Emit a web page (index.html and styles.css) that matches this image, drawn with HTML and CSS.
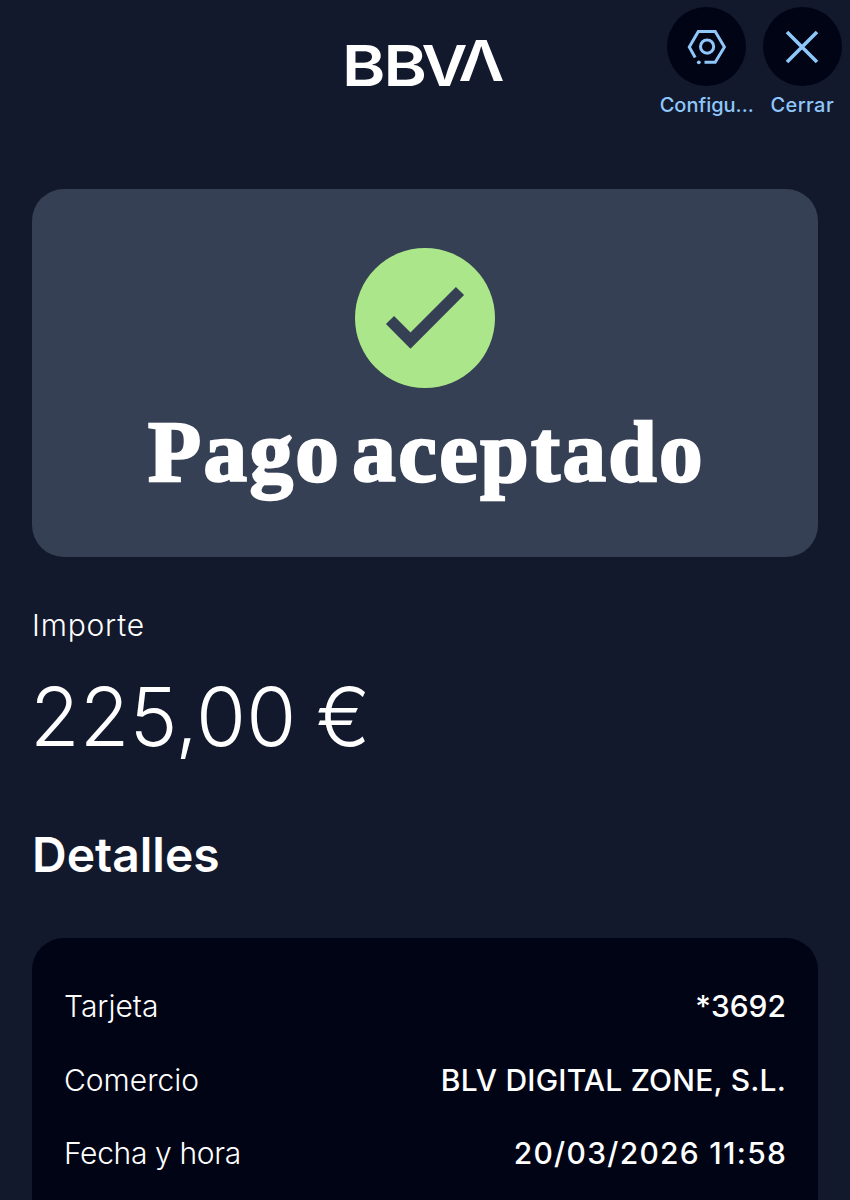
FILE: index.html
```html
<!DOCTYPE html>
<html lang="es">
<head>
  <meta charset="UTF-8" />
  <meta name="viewport" content="width=device-width, initial-scale=1.0"/>
  <title>Pago aceptado</title>
  <link rel="stylesheet" href="styles.css">
</head>
<body>
  <header class="header">
    <svg class="logo" viewBox="0 0 160 52" aria-label="BBVA">
      <text x="-3" y="49" textLength="43.5" lengthAdjust="spacingAndGlyphs">B</text>
      <text x="38.5" y="49" textLength="43.5" lengthAdjust="spacingAndGlyphs">B</text>
      <text x="76.5" y="49" textLength="46" lengthAdjust="spacingAndGlyphs">V</text>
      <text x="113.5" y="43.5" textLength="46" lengthAdjust="spacingAndGlyphs">Λ</text>
    </svg>
    <nav class="actions">
      <div class="action">
        <button class="circle" aria-label="Configuración">
          <svg width="40" height="40" viewBox="0 0 40 40" fill="none" stroke="#8fc7fb" stroke-width="3">
            <path d="M8.2 30.5L2.3 20L11.3 4.5H28.2L37.4 20L28.2 35.2H17.5"/>
            <circle cx="20.1" cy="19.6" r="6.6"/>
            <circle cx="11.8" cy="35.3" r="1.9" fill="#8fc7fb" stroke="none"/>
          </svg>
        </button>
        <span class="config">Configu...</span>
      </div>
      <div class="action">
        <button class="circle" aria-label="Cerrar">
          <svg width="40" height="40" viewBox="0 0 40 40" fill="none" stroke="#8fc7fb" stroke-width="3.6">
            <path d="M5 5L35 35M35 5L5 35"/>
          </svg>
        </button>
        <span>Cerrar</span>
      </div>
    </nav>
  </header>

  <main class="content">
    <section class="status">
      <svg class="check" viewBox="0 0 140 140">
        <circle cx="70" cy="70" r="70" fill="#abe78a"/>
        <path d="M35 72L55.5 92.5L105 43" fill="none" stroke="#364054" stroke-width="11.5"/>
      </svg>
      <h1>Pago aceptado</h1>
    </section>

    <p class="label">Importe</p>
    <p class="amount">225,00 €</p>

    <h2>Detalles</h2>
    <section class="details">
      <div class="row">
        <span class="name">Tarjeta</span>
        <span class="value">*3692</span>
      </div>
      <div class="row">
        <span class="name">Comercio</span>
        <span class="value shop">BLV DIGITAL ZONE, S.L.</span>
      </div>
      <div class="row">
        <span class="name date-name">Fecha y hora</span>
        <span class="value date">20/03/2026 11:58</span>
      </div>
    </section>
  </main>
</body>
</html>
```
FILE: styles.css
```css
* {
  box-sizing: border-box;
}

body {
  margin: 0;
  height: 1200px;
  overflow: hidden;
  background: #12192c;
  color: white;
  font-family: Inter, "Liberation Sans", sans-serif;
}

h1, h2, p {
  margin: 0;
}

.header {
  display: grid;
  grid-template-columns: 1fr 160px 1fr;
  height: 189px;
}

.logo {
  grid-column: 2;
  width: 160px;
  height: 52px;
  margin-top: 37px;
  overflow: visible;
  fill: white;
  font-size: 57px;
  font-weight: 600;
}

.actions {
  display: flex;
  justify-content: flex-end;
  padding-top: 7px;
}

.action {
  display: flex;
  flex-direction: column;
  align-items: center;
  width: 95.5px;
  color: #8fc7fb;
  font-size: 20px;
  font-weight: 500;
  line-height: 24px;
  letter-spacing: 0.4px;
}

.config {
  letter-spacing: 0;
}

.circle {
  display: flex;
  align-items: center;
  justify-content: center;
  width: 79px;
  height: 79px;
  margin-bottom: 7px;
  padding: 0;
  border: none;
  border-radius: 50%;
  background: #000415;
}

.content {
  padding: 0 32px;
}

.status {
  display: flex;
  flex-direction: column;
  align-items: center;
  height: 368px;
  padding-top: 59px;
  border-radius: 32px;
  background: #364054;
}

.check {
  width: 140px;
  height: 140px;
}

h1 {
  margin-top: 14px;
  padding-left: 3px;
  font-family: "Liberation Serif", serif;
  font-size: 87px;
  line-height: 100px;
  letter-spacing: 2.4px;
  word-spacing: -13px;
  white-space: nowrap;
  -webkit-text-stroke: 2.4px white;
}

.label {
  margin-top: 48px;
  font-size: 30px;
  font-weight: 300;
  line-height: 40px;
  letter-spacing: 0.8px;
}

.amount {
  margin-top: 22px;
  margin-left: -2px;
  font-size: 81px;
  font-weight: 300;
  line-height: 100px;
  word-spacing: -3px;
}

h2 {
  margin-top: 58px;
  font-size: 48px;
  font-weight: 600;
  line-height: 60px;
}

.details {
  display: flex;
  flex-direction: column;
  gap: 36px;
  height: 320px;
  margin-top: 53px;
  padding: 50px 32px;
  border-radius: 32px;
  background: #000415;
}

.row {
  display: flex;
  justify-content: space-between;
  font-size: 30px;
  line-height: 37.5px;
}

.name {
  font-weight: 300;
}

.date-name {
  letter-spacing: -0.35px;
}

.value {
  font-weight: 500;
}

.shop {
  letter-spacing: 0.2px;
}

.date {
  margin-right: -1.3px;
  letter-spacing: 1.3px;
}
```
